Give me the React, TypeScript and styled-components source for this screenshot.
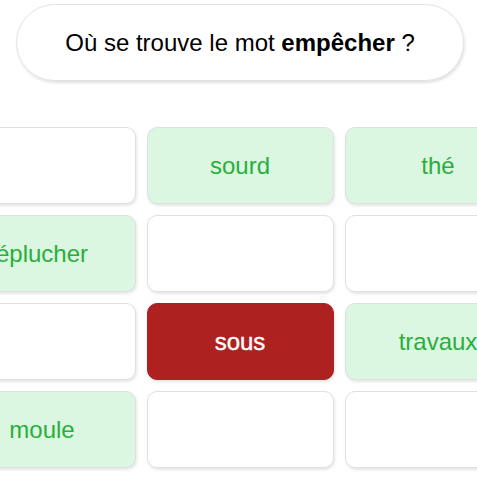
import React from 'react';
import styled, { createGlobalStyle, css } from 'styled-components';

type Tone = 'blank' | 'found' | 'wrong';

const GlobalStyle = createGlobalStyle`
    html, body {
        margin: 0;
        padding: 0;
        background: #ffffff;
        overflow: hidden;
    }
    body {
        font-family: 'Liberation Sans', Arial, sans-serif;
    }
`;

const Page = styled.div`
    width: 477px;
    height: 477px;
    padding: 4px 0 0 3px;
    box-sizing: border-box;
    display: flex;
    flex-direction: column;
    align-items: center;
    gap: 46px;
    overflow: hidden;
`;

const Question = styled.div`
    width: 448px;
    height: 77px;
    box-sizing: border-box;
    border: 1px solid #e2e2e2;
    border-radius: 39px;
    box-shadow: 1px 2px 3px rgba(0, 0, 0, 0.12);
    display: flex;
    align-items: center;
    justify-content: center;
    font-size: 24px;
    color: #000;
    flex-shrink: 0;

    b {
        font-weight: 700;
    }
`;

const Board = styled.div`
    display: grid;
    grid-template-columns: repeat(3, 187px);
    grid-auto-rows: 77px;
    gap: 11px;
    flex-shrink: 0;
`;

const Tile = styled.div<{ $tone: Tone }>`
    box-sizing: border-box;
    border-radius: 10px;
    border: 1px solid #e0e0e0;
    box-shadow: 1px 2px 3px rgba(0, 0, 0, 0.1);
    display: flex;
    align-items: center;
    justify-content: center;
    font-size: 24px;
    background: #ffffff;
    ${({ $tone }) =>
        $tone === 'found' &&
        css`
            background: #dcf7e1;
            color: #2aae3c;
        `}
    ${({ $tone }) =>
        $tone === 'wrong' &&
        css`
            background: #ad2121;
            border-color: #ad2121;
            color: #ffffff;
            -webkit-text-stroke: 0.4px #ffffff;
        `}
`;

const tiles: { word?: string; tone: Tone }[] = [
    { tone: 'blank' },
    { word: 'sourd', tone: 'found' },
    { word: 'thé', tone: 'found' },
    { word: 'éplucher', tone: 'found' },
    { tone: 'blank' },
    { tone: 'blank' },
    { tone: 'blank' },
    { word: 'sous', tone: 'wrong' },
    { word: 'travaux', tone: 'found' },
    { word: 'moule', tone: 'found' },
    { tone: 'blank' },
    { tone: 'blank' }
];

export default function App() {
    return (
        <>
            <GlobalStyle />
            <Page>
                <Question>
                    Où se trouve le mot&nbsp;<b>empêcher</b>&nbsp;?
                </Question>
                <Board>
                    {tiles.map((t, i) => (
                        <Tile key={i} $tone={t.tone}>
                            {t.word}
                        </Tile>
                    ))}
                </Board>
            </Page>
        </>
    );
}
